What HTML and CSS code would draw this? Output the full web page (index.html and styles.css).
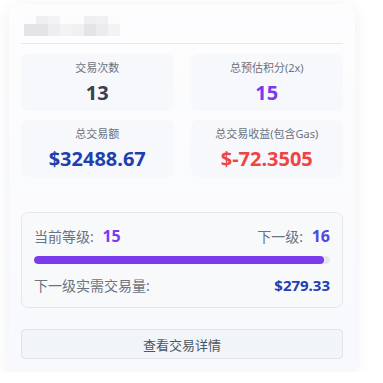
FILE: index.html
```html
<!DOCTYPE html>
<html lang="zh-CN">
<head>
<meta charset="utf-8">
<link rel="stylesheet" href="styles.css">
</head>
<body>
<div class="card">
  <div class="header">
    <div class="mosaic">
      <span class="m m0"></span><span class="m m1"></span><span class="m m2"></span><span class="m m0"></span><span class="m m0"></span><span class="m m1"></span><span class="m m3"></span><span class="m m0"></span>
      <span class="m m4"></span><span class="m m4"></span><span class="m m5"></span><span class="m m2"></span><span class="m m3"></span><span class="m m4"></span><span class="m m6"></span><span class="m m2"></span>
    </div>
  </div>
  <div class="stats">
    <div class="stat">
      <div class="label">交易次数</div>
      <div class="value dark">13</div>
    </div>
    <div class="stat">
      <div class="label">总预估积分(2x)</div>
      <div class="value purple">15</div>
    </div>
    <div class="stat">
      <div class="label">总交易额</div>
      <div class="value blue">$32488.67</div>
    </div>
    <div class="stat">
      <div class="label">总交易收益(包含Gas)</div>
      <div class="value red">$-72.3505</div>
    </div>
  </div>
  <div class="level">
    <div class="row">
      <span class="lv-label">当前等级: <b class="lv-cur">15</b></span>
      <span class="lv-label">下一级: <b class="lv-next">16</b></span>
    </div>
    <div class="track"><div class="fill" style="width:98%"></div></div>
    <div class="row row2">
      <span class="lv-label">下一级实需交易量:</span>
      <b class="need">$279.33</b>
    </div>
  </div>
  <div class="btn">查看交易详情</div>
</div>
</body>
</html>
```
FILE: styles.css
```css
html, body {
  margin: 0;
  padding: 0;
  background: #ffffff;
}
body {
  font-family: "Noto Sans", "Noto Sans CJK SC", sans-serif;
  padding: 4px 0 0 9px;
}
.card {
  width: 346px;
  height: 368px;
  box-sizing: border-box;
  padding: 0 12px;
  border-radius: 12px;
  background: linear-gradient(180deg, #fdfdfe 0%, #f8f9fd 100%);
  box-shadow: 0 4px 18px rgba(30, 40, 80, 0.08);
  display: flex;
  flex-direction: column;
}
.header {
  border-bottom: 1px solid #e8e9ed;
  display: flex;
  align-items: flex-start;
  padding-top: 12px;
  box-sizing: border-box;
  height: 40px;
}
.mosaic {
  display: grid;
  grid-template-columns: repeat(8, 12px);
  grid-template-rows: 8px 12px;
  margin-left: 3px;
}
.m { display: block; }
.m0 { background: #fcfcfd; }
.m1 { background: #efeff2; }
.m2 { background: #f3f3f5; }
.m3 { background: #f0f0f2; }
.m4 { background: #e3e4e8; }
.m5 { background: #eeeef1; }
.m6 { background: #ebecee; }
.stats {
  margin-top: 10px;
  display: grid;
  grid-template-columns: 1fr 1fr;
  column-gap: 17px;
  row-gap: 9px;
}
.stat {
  height: 57px;
  box-sizing: border-box;
  padding-top: 6px;
  background: #f7f8fb;
  border-radius: 7px;
  text-align: center;
}
.label {
  font-size: 11px;
  line-height: 15px;
  color: #6b7280;
}
.value {
  margin-top: 5px;
  font-size: 20px;
  line-height: 26px;
  font-weight: 700;
}
.dark { color: #374151; }
.purple { color: #7c3aed; }
.blue { color: #1e40af; }
.red { color: #ef4444; }
.level {
  margin-top: 35px;
  border: 1px solid #e5e7eb;
  border-radius: 7px;
  background: #f8f9fb;
  padding: 13px 12px 12px;
}
.row {
  display: flex;
  justify-content: space-between;
  align-items: center;
  height: 20px;
}
.row2 { margin-top: 11px; }
.lv-label {
  font-size: 14px;
  color: #6b7280;
}
.lv-cur { color: #7c3aed; font-size: 16px; margin-left: 5px; }
.lv-next { color: #4f46e5; font-size: 16px; margin-left: 5px; }
.need { color: #1e40af; font-size: 15px; }
.track {
  margin-top: 10px;
  height: 8px;
  border-radius: 4px;
  background: #e5e7eb;
  overflow: hidden;
}
.fill {
  height: 100%;
  background: #7c3aed;
  border-radius: 4px;
}
.btn {
  margin-top: 21px;
  height: 30px;
  box-sizing: border-box;
  border: 1px solid #dde3ea;
  border-radius: 4px;
  background: #f1f4f8;
  color: #4b5563;
  font-size: 13px;
  display: flex;
  align-items: center;
  justify-content: center;
}
```
